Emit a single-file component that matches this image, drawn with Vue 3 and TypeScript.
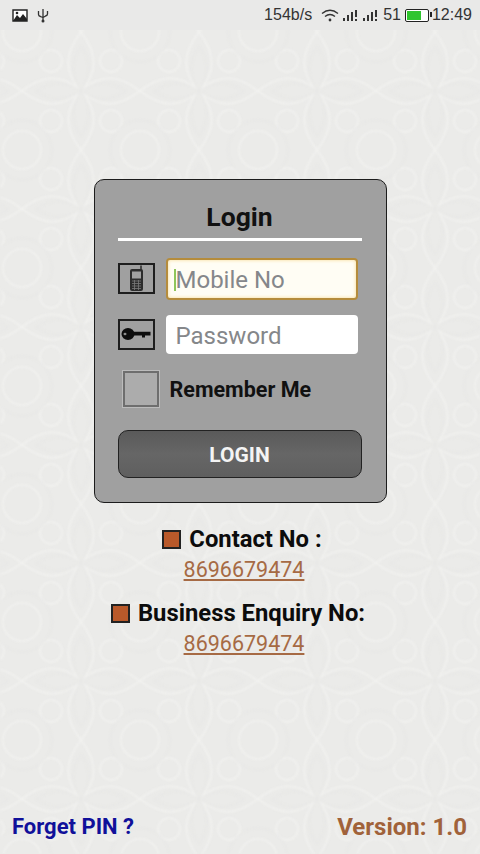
<template>
  <div class="screen">
    <svg class="pattern" width="480" height="854" aria-hidden="true">
      <defs>
        <pattern id="damask" width="118" height="118" patternUnits="userSpaceOnUse" x="22" y="32">
          <g fill="none" stroke="#f2f2f0" stroke-width="1.600">
            <path d="M59 0C42 22 42 40 59 59C76 40 76 22 59 0Z" />
            <path d="M59 118C42 96 42 78 59 59C76 78 76 96 59 118Z" />
            <path d="M0 59C22 42 40 42 59 59C40 76 22 76 0 59Z" />
            <path d="M118 59C96 42 78 42 59 59C78 76 96 76 118 59Z" />
            <circle cx="0" cy="0" r="19" />
            <circle cx="118" cy="0" r="19" />
            <circle cx="0" cy="118" r="19" />
            <circle cx="118" cy="118" r="19" />
            <circle cx="29" cy="29" r="11" />
            <circle cx="89" cy="29" r="11" />
            <circle cx="29" cy="89" r="11" />
            <circle cx="89" cy="89" r="11" />
          </g>
          <g fill="none" stroke="#e6e6e4" stroke-width="1">
            <path d="M59 14C49 29 49 43 59 59C69 43 69 29 59 14Z" />
            <path d="M59 104C49 89 49 75 59 59C69 75 69 89 59 104Z" />
            <path d="M14 59C29 49 43 49 59 59C43 69 29 69 14 59Z" />
            <path d="M104 59C89 49 75 49 59 59C75 69 89 69 104 59Z" />
            <circle cx="0" cy="0" r="30" />
            <circle cx="118" cy="0" r="30" />
            <circle cx="0" cy="118" r="30" />
            <circle cx="118" cy="118" r="30" />
          </g>
        </pattern>
      </defs>
      <rect width="480" height="854" fill="url(#damask)" />
    </svg>

    <header class="status">
      <div class="status-left">
        <svg width="16" height="13" viewBox="0 0 16 13">
          <path d="M1 1h14v11H1z" fill="#fff" stroke="#222" stroke-width="1.400" />
          <path d="M1 12l4-6 3 3 3-4 4 5v2H1z" fill="#222" />
          <circle cx="5" cy="4" r="1.300" fill="#222" />
        </svg>
        <svg width="12" height="15" viewBox="0 0 12 15">
          <path d="M6 1v13M1.500 3v3.500Q1.500 8 3.500 8.500L6 9.500L8.500 8Q10.500 7.500 10.500 6V3" fill="none" stroke="#333" stroke-width="1.300" />
          <circle cx="6" cy="13" r="1.500" fill="#333" />
        </svg>
      </div>
      <div class="status-right">
        <span class="speed">154b/s</span>
        <svg class="wifi" width="18" height="13" viewBox="0 0 18 13">
          <path d="M1 4.500Q9 -2 17 4.500M4 7.500Q9 3.500 14 7.500" fill="none" stroke="#333" stroke-width="1.400" />
          <circle cx="9" cy="11" r="1.400" fill="#333" />
        </svg>
        <svg class="bars" width="15" height="13" viewBox="0 0 15 13">
          <path d="M0 9h2v3H0zM4 6h2v6H4zM8 3h2v9H8zM12 1h2v7h-2zM12 10h2v2h-2z" fill="#333" />
        </svg>
        <svg class="bars" width="15" height="13" viewBox="0 0 15 13">
          <path d="M0 9h2v3H0zM4 6h2v6H4zM8 3h2v9H8zM12 1h2v7h-2zM12 10h2v2h-2z" fill="#333" />
        </svg>
        <span class="level">51</span>
        <div class="battery"><div class="charge"></div></div>
        <span class="clock">12:49</span>
      </div>
    </header>

    <main class="content">
      <form class="card" @submit.prevent>
        <h1 class="title">Login</h1>
        <div class="field-row first">
          <span class="field-icon">
            <svg width="15" height="27" viewBox="0 0 15 27">
              <path d="M12 0.500V5" stroke="#222" stroke-width="1.400" />
              <rect x="1" y="4" width="13" height="22" rx="2" fill="#2c2c2c" />
              <rect x="3" y="6.500" width="9" height="7" fill="#a0a0a0" />
              <path d="M3 16h9M3 18.500h9M3 21h9M3 23.500h9M5.500 15v10M9.500 15v10" stroke="#7a7a7a" stroke-width="0.800" />
            </svg>
          </span>
          <div class="focus-wrap">
            <input class="text-input focused" type="text" placeholder="Mobile No" />
            <span class="caret"></span>
          </div>
        </div>
        <div class="field-row second">
          <span class="field-icon">
            <svg width="30" height="14" viewBox="0 0 30 14">
              <ellipse cx="7" cy="7" rx="6.500" ry="6" fill="#0c0c0c" />
              <ellipse cx="4" cy="7" rx="1.500" ry="1.200" fill="#8c8c8c" />
              <path d="M12 4.800h17.500v3.600H24v2h-3v-2h-9z" fill="#0c0c0c" />
            </svg>
          </span>
          <input class="text-input short" type="password" placeholder="Password" />
        </div>
        <label class="remember">
          <span class="check"></span>
          <span>Remember Me</span>
        </label>
        <button class="login-btn" type="submit">LOGIN</button>
      </form>

      <section class="contacts">
        <div class="contact-head head-one"><span class="bullet"></span>Contact No :</div>
        <a class="phone" href="#">8696679474</a>
        <div class="contact-head head-two"><span class="bullet"></span>Business Enquiry No:</div>
        <a class="phone" href="#">8696679474</a>
      </section>
    </main>

    <footer class="foot">
      <a class="forget" href="#">Forget PIN ?</a>
      <span class="version">Version: 1.0</span>
    </footer>
  </div>
</template>

<script setup lang="ts">
</script>

<style>
html,
body {
  margin: 0;
  padding: 0;
}
</style>

<style scoped>
.screen {
  position: relative;
  width: 480px;
  height: 854px;
  overflow: hidden;
  display: flex;
  flex-direction: column;
  background: #ebebe9;
  font-family: Roboto, "Liberation Sans", sans-serif;
}

.pattern {
  position: absolute;
  top: 0;
  left: 0;
  filter: blur(1.2px);
}

.status {
  position: relative;
  height: 30px;
  box-sizing: border-box;
  padding: 0 8px 0 12px;
  display: flex;
  justify-content: space-between;
  align-items: center;
  background: #e9e9e8;
  color: #333;
  font-family: "Liberation Sans", sans-serif;
  font-size: 16px;
}

.status-left,
.status-right {
  display: flex;
  align-items: center;
}

.status-left {
  gap: 9px;
}

.speed {
  margin-right: 9px;
}

.wifi {
  margin-right: 4px;
}

.bars {
  margin-right: 5px;
}

.level {
  margin: 0 4px 0 0;
}

.battery {
  position: relative;
  width: 24px;
  height: 13px;
  box-sizing: border-box;
  border: 1.500px solid #222;
  border-radius: 2px;
  padding: 1px;
  background: #fff;
  margin-right: 3px;
}

.battery::after {
  content: "";
  position: absolute;
  right: -4px;
  top: 2px;
  width: 2px;
  height: 5px;
  background: #222;
}

.charge {
  width: 68%;
  height: 100%;
  background: #2fc52f;
}

.content {
  position: relative;
  flex: 1;
  display: flex;
  flex-direction: column;
  align-items: center;
}

.card {
  width: 293px;
  height: 324px;
  margin-top: 149px;
  box-sizing: border-box;
  padding: 0 24px 0 23px;
  border: 1px solid #1c1c1c;
  border-radius: 10px;
  background: #a0a0a0;
  display: flex;
  flex-direction: column;
}

.title {
  margin: 0;
  height: 61px;
  box-sizing: border-box;
  padding-top: 20px;
  border-bottom: 3px solid #fff;
  text-align: center;
  font-size: 26.500px;
  line-height: 33px;
  font-weight: 700;
  color: #111;
}

.field-row {
  display: flex;
  align-items: center;
  gap: 11px;
}

.first {
  margin-top: 17px;
}

.second {
  margin-top: 15px;
}

.field-icon {
  width: 37px;
  height: 31px;
  margin-top: -1px;
  box-sizing: border-box;
  border: 2px solid #1e1e1e;
  display: flex;
  align-items: center;
  justify-content: center;
  flex: none;
}

.focus-wrap {
  position: relative;
  display: flex;
}

.caret {
  position: absolute;
  left: 8px;
  top: 11px;
  width: 2px;
  height: 22px;
  background: #8fc55a;
}

.text-input {
  width: 192px;
  height: 40px;
  box-sizing: border-box;
  padding: 2px 0 0 10px;
  border: none;
  border-radius: 4px;
  outline: none;
  background: #fff;
  font-family: Roboto, "Liberation Sans", sans-serif;
  font-size: 24px;
  color: #333;
}

.short {
  height: 39px;
}

.text-input::placeholder {
  color: #85878a;
  opacity: 1;
}

.focused {
  height: 42px;
  border: 2px solid #b58c3c;
  padding-left: 8px;
  background: #fffdf4;
  box-shadow: inset 0 0 3px 1px #fbe8b8;
}

.remember {
  display: flex;
  align-items: center;
  gap: 11px;
  margin: 17px 0 0 5px;
  font-size: 21.500px;
  font-weight: 700;
  color: #111;
}

.check {
  width: 36px;
  height: 36px;
  box-sizing: border-box;
  border: 2px solid #6e6e6e;
  outline: 1px solid #bcbcbc;
  background: #acacac;
  flex: none;
}

.login-btn {
  height: 48px;
  margin-top: 23px;
  border: 1px solid #222;
  border-radius: 10px;
  background: linear-gradient(#5a5a5a, #666 50%, #5f5f5f);
  color: #f4f4f4;
  font-family: Roboto, "Liberation Sans", sans-serif;
  font-size: 21px;
  font-weight: 700;
  padding: 2px 0 0;
}

.contacts {
  margin-top: 20px;
  display: flex;
  flex-direction: column;
  align-items: center;
}

.contact-head {
  display: flex;
  align-items: center;
  gap: 8px;
  height: 32px;
  font-size: 23.800px;
  font-weight: 700;
  color: #0c0c0c;
}

.head-one {
  margin-left: 4px;
}

.head-two {
  margin: 12px 4px 0 0;
}

.bullet {
  width: 19px;
  height: 19px;
  box-sizing: border-box;
  border: 2px solid #222;
  background: #b9592a;
  flex: none;
}

.phone {
  margin-left: 8px;
  line-height: 30px;
  font-size: 21.500px;
  color: #a66a44;
  text-underline-offset: 2px;
}

.foot {
  position: relative;
  height: 42px;
  box-sizing: border-box;
  padding: 0 13px 0 12px;
  display: flex;
  justify-content: space-between;
  align-items: flex-start;
  font-weight: 700;
}

.forget {
  font-size: 22px;
  line-height: 30px;
  color: #10109a;
  text-decoration: none;
}

.version {
  font-size: 24px;
  line-height: 30px;
  color: #a0623a;
}
</style>
